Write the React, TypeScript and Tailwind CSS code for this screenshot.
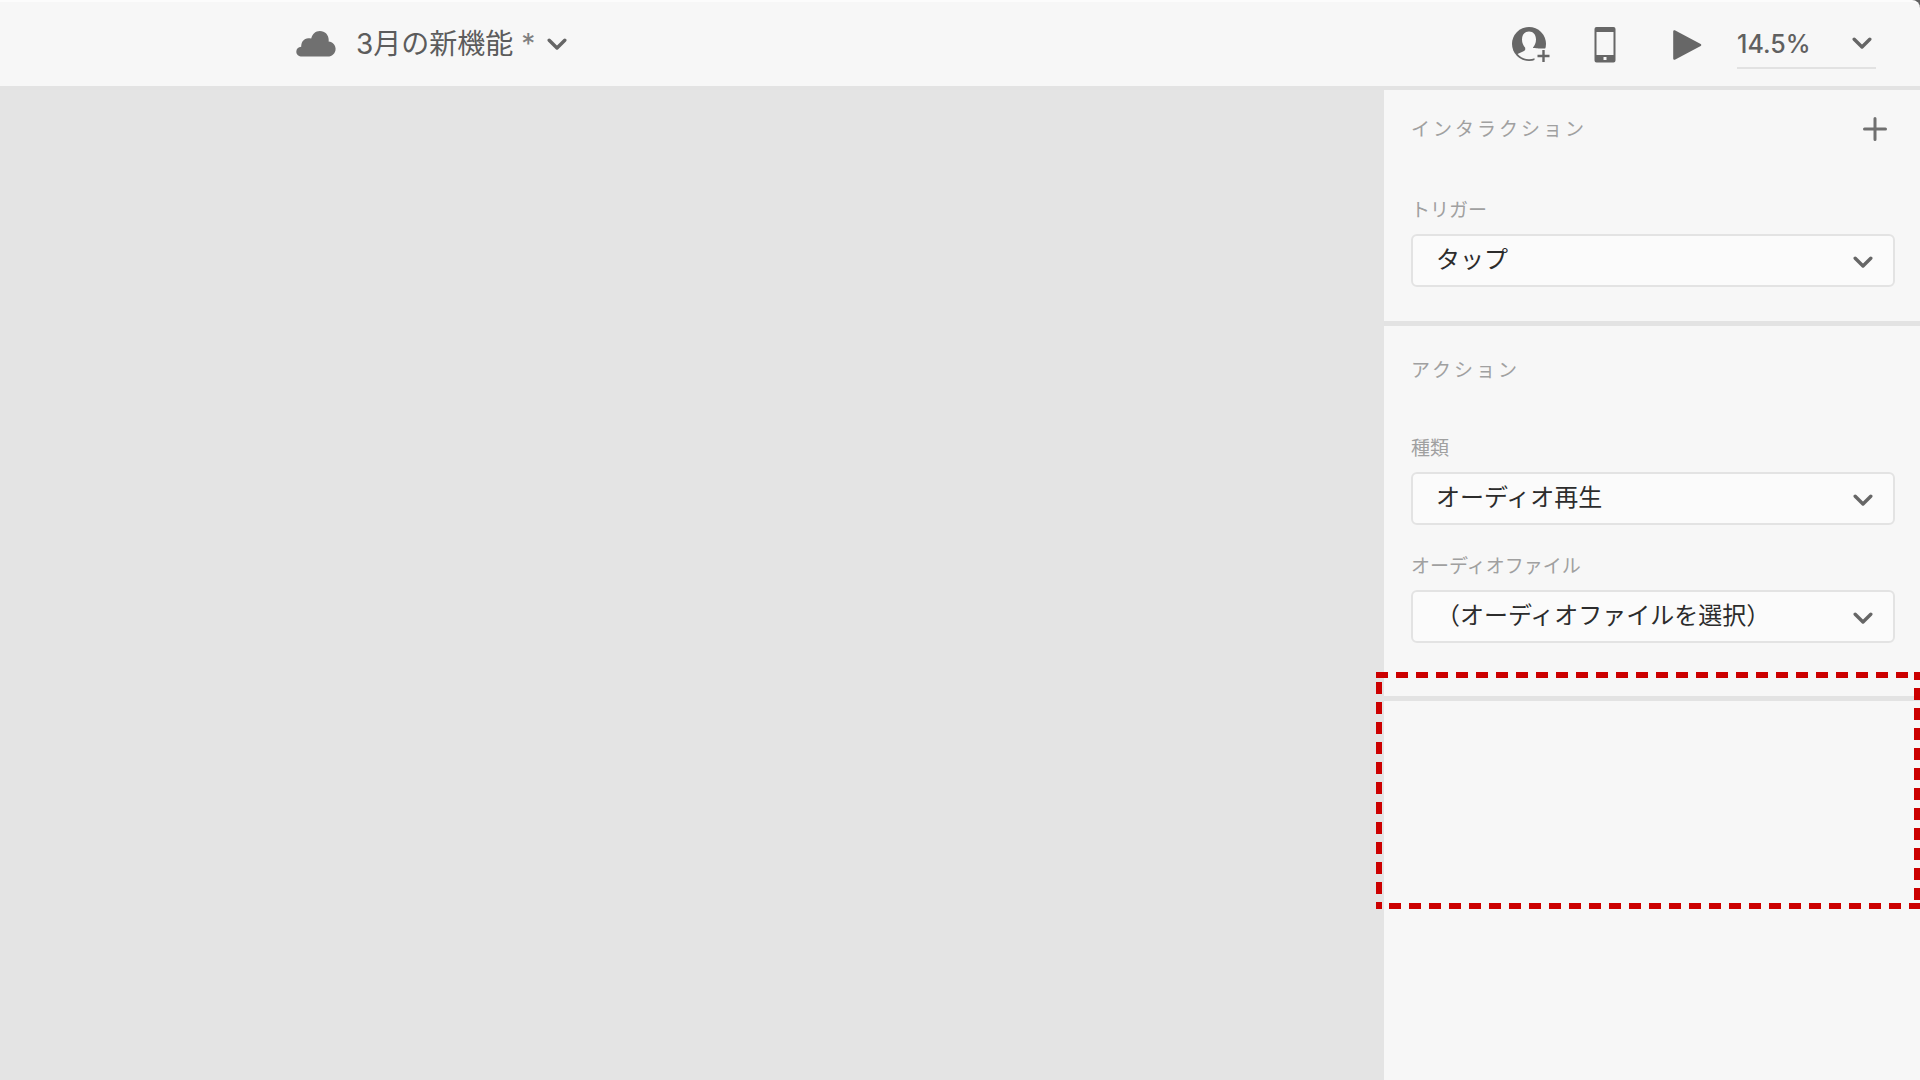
import { useId } from "react";

function Chevron() {
  return (
    <svg width="20" height="13" viewBox="0 0 20 13" fill="none" aria-hidden="true">
      <path d="M2.2 2.2 10 10 17.8 2.2" stroke="#666666" strokeWidth="3.4" strokeLinecap="round" strokeLinejoin="round" />
    </svg>
  );
}

function CloudIcon() {
  return (
    <svg width="40" height="27" viewBox="0 0 40 27" fill="#707070" aria-hidden="true">
      <path d="M6 25.600C2.800 25.600.3 23.600.3 20.800c0-2.700 1.900-4.700 4.900-5C5.200 10.600 8 7.300 12.300 7.200c1 0 1.900.1 2.900.4C16.600 2.800 19.600.1 23.800.1c5.200 0 8.900 3.900 8.900 9 0 .5 0 .9-.1 1.300 4.200.4 7 3.600 7 7.400 0 4.500-3.300 7.800-7.900 7.800Z" />
    </svg>
  );
}

function ShareIcon() {
  return (
    <svg width="38" height="36" viewBox="0 0 38 36" aria-hidden="true">
      <circle cx="17" cy="17" r="17" fill="#676767" />
      <path
        d="M17 4.500c-4.300 0-7 3.200-7 8 0 3.300 1.300 6.200 3.200 8.200v2.100c-1 1.900-5 2.600-7.600 4.200A15.300 15.300 0 0 0 17 32.300c2 0 3.900-.4 5.500-1.100v4.800H38V21.500H28.600c-2.400-.2-7-.400-7.800-.8V20.700c1.900-2 3.200-4.900 3.200-8.200 0-4.800-2.700-8-7-8Z"
        fill="#f7f7f7"
      />
      <path d="M31.500 23v12M25.500 29h12" stroke="#676767" strokeWidth="2.400" />
    </svg>
  );
}

function PhoneIcon() {
  return (
    <svg width="22" height="36" viewBox="0 0 22 36" aria-hidden="true">
      <path fillRule="evenodd" fill="#676767" d="M2.500 0h17A2 2 0 0 1 21.500 2v31.500a2 2 0 0 1-2 2h-17a2 2 0 0 1-2-2V2a2 2 0 0 1 2-2ZM2.500 5v23h17V5ZM9.500 30v3h3v-3Z" />
    </svg>
  );
}

function PlayIcon() {
  return (
    <svg width="29" height="30" viewBox="0 0 29 30" aria-hidden="true">
      <path fill="#676767" d="M.2 1.600C.2.400 1.300-.1 2.300.5L27.700 14.100c.8.400.8 1.400 0 1.800L2.300 29.500c-1 .6-2.100.1-2.100-1.100Z" />
    </svg>
  );
}

function Field({ label, value }: { label: string; value: string }) {
  const id = useId();
  return (
    <div className="flex flex-col gap-[9px]">
      <label htmlFor={id} className="text-[19px] leading-7 text-[#a0a0a0]">
        {label}
      </label>
      <div className="relative">
        <select
          id={id}
          className="block h-[53px] w-full appearance-none rounded-md border-2 border-[#e3e3e3] bg-[#fbfbfb] px-[23px] pb-px text-[24px] text-[#2c2c2c]"
        >
          <option>{value}</option>
        </select>
        <span className="pointer-events-none absolute inset-y-0 right-[22px] flex items-center pt-1">
          <Chevron />
        </span>
      </div>
    </div>
  );
}

function Highlight() {
  const dash = { stroke: "#cc0000", strokeWidth: 6, strokeDasharray: "12 8" };
  return (
    <svg className="pointer-events-none absolute -top-[29px] right-0 h-[237px] w-[calc(100%+8px)]" aria-hidden="true">
      <line x1="0" y1="3" x2="100%" y2="3" {...dash} />
      <line x1="0" y1="234" x2="100%" y2="234" strokeDashoffset="7" {...dash} />
      <line x1="3" y1="0" x2="3" y2="100%" strokeDashoffset="10" {...dash} />
      <svg x="100%" className="overflow-visible">
        <line x1="-3" y1="0" x2="-3" y2="237" strokeDashoffset="4" {...dash} />
      </svg>
    </svg>
  );
}

export default function App() {
  return (
    <div className="flex min-h-screen flex-col bg-[#606060] font-['Inter','Noto_Sans_CJK_JP',sans-serif]">
      <header className="flex h-[86px] items-center justify-between rounded-tr-lg border-t-2 border-[#fcfcfc] bg-[#f7f7f7] pr-11 pl-74">
        <button type="button" className="flex items-center text-[28px] text-[#5c5c5c]">
          <CloudIcon />
          <span className="ml-5">3月の新機能</span>
          <span className="ml-2 text-[#808080]">*</span>
          <span className="ml-3">
            <Chevron />
          </span>
        </button>
        <div className="flex items-center pt-0.5">
          <button type="button" aria-label="共有" className="mr-11">
            <ShareIcon />
          </button>
          <button type="button" aria-label="デバイスプレビュー" className="mr-[57px]">
            <PhoneIcon />
          </button>
          <button type="button" aria-label="再生" className="mr-[35px]">
            <PlayIcon />
          </button>
          <div className="relative">
            <select
              aria-label="ズーム"
              className="block h-12 w-[139px] appearance-none border-b-2 border-[#e2e2e2] pt-0.5 text-[25px] font-medium text-[#606060]"
            >
              <option>14.5%</option>
            </select>
            <span className="pointer-events-none absolute inset-y-0 right-1 flex items-center pb-1">
              <Chevron />
            </span>
          </div>
        </div>
      </header>
      <div className="flex grow bg-[#e3e3e3] pt-1">
        <main className="grow bg-[#e4e4e4]" />
        <aside className="flex w-[536px] flex-col bg-[#f7f7f7]">
          <section className="border-b-5 border-[#e3e3e3] pr-[25px] pb-[34px] pl-[27px]">
            <div className="mb-[29px] flex h-[78px] items-center justify-between">
              <h2 className="pt-0.5 text-[19px] tracking-[3px] text-[#a0a0a0]">インタラクション</h2>
              <button type="button" aria-label="追加" className="mr-2">
                <svg width="24" height="24" viewBox="0 0 24 24" aria-hidden="true">
                  <path d="M12 1.500v21M1.500 12h21" stroke="#707070" strokeWidth="3" strokeLinecap="round" />
                </svg>
              </button>
            </div>
            <Field label="トリガー" value="タップ" />
          </section>
          <section className="border-b-5 border-[#e3e3e3] pr-[25px] pb-[53px] pl-[27px]">
            <div className="mb-[21px] flex h-[88px] items-center">
              <h2 className="pt-0.5 text-[19px] tracking-[3px] text-[#a0a0a0]">アクション</h2>
            </div>
            <div className="flex flex-col gap-7">
              <Field label="種類" value="オーディオ再生" />
              <Field label="オーディオファイル" value="（オーディオファイルを選択）" />
            </div>
          </section>
          <section className="relative h-52">
            <Highlight />
          </section>
        </aside>
      </div>
    </div>
  );
}
